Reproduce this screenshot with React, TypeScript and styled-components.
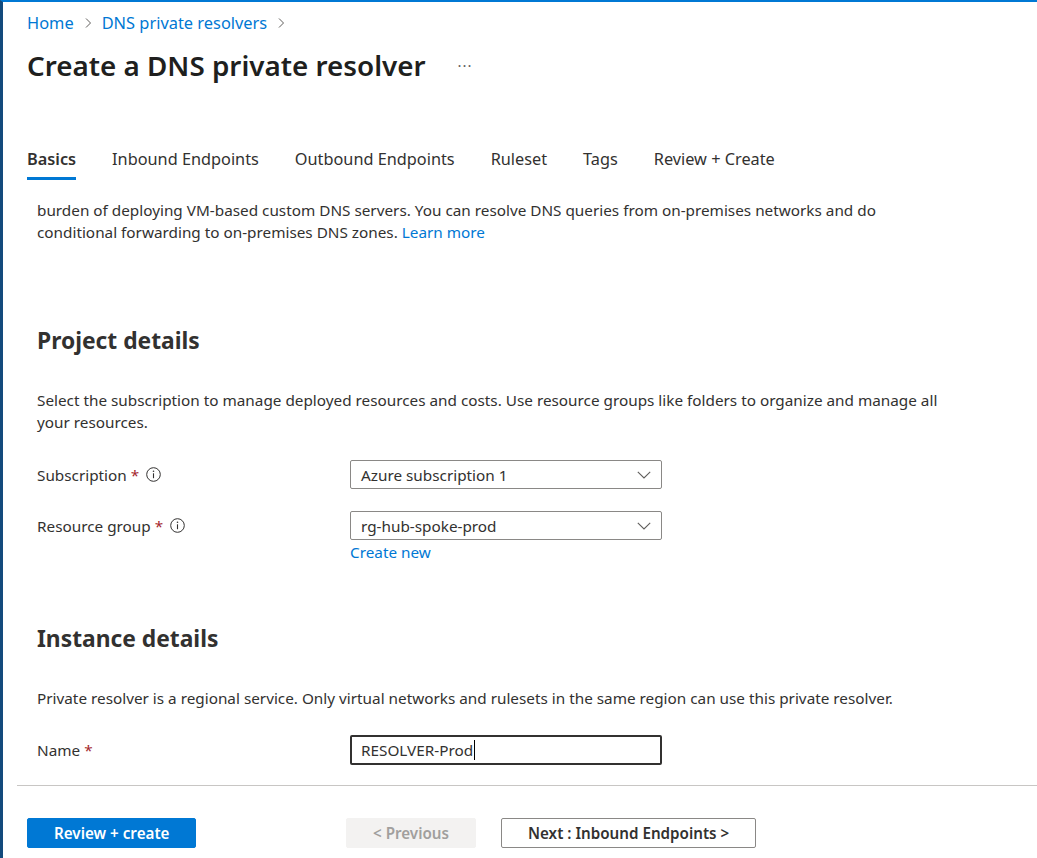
import React from "react";
import styled, { createGlobalStyle } from "styled-components";

const GlobalStyle = createGlobalStyle`
  html, body {
    margin: 0;
    padding: 0;
    background: #ffffff;
  }
  body {
    font-family: "Noto Sans", "Open Sans", sans-serif;
    color: #323130;
  }
  * {
    box-sizing: border-box;
  }
`;

const Frame = styled.div`
  display: flex;
  flex-direction: column;
  height: 100vh;
  overflow: hidden;
  border-top: 2px solid #0078d4;
  border-left: 3px solid #134a7c;
`;

const Header = styled.header`
  display: flex;
  flex-direction: column;
  padding-left: 24px;
`;

const Breadcrumb = styled.nav`
  display: flex;
  align-items: center;
  gap: 10px;
  margin-top: 10px;
  height: 22px;
  font-size: 16.4px;
`;

const Crumb = styled.a`
  color: #0078d4;
  text-decoration: none;
  line-height: 22px;
`;

const TitleRow = styled.div`
  display: flex;
  align-items: center;
  gap: 32px;
  margin-top: 13px;
  height: 36px;
`;

const Title = styled.h1`
  margin: 0;
  font-size: 27.8px;
  font-weight: 600;
  line-height: 36px;
  color: #201f1e;
`;

const MoreButton = styled.span`
  font-size: 15px;
  letter-spacing: 1px;
  color: #605e5c;
  line-height: 36px;
`;

const TabBar = styled.div`
  display: flex;
  gap: 36px;
  margin-top: 65px;
`;

const Tab = styled.div<{ $active?: boolean }>`
  font-size: 16.3px;
  line-height: 22px;
  padding-bottom: 7px;
  font-weight: ${(p) => (p.$active ? 600 : 400)};
  color: #323130;
  border-bottom: 3px solid ${(p) => (p.$active ? "#0078d4" : "transparent")};
`;

const Pane = styled.main`
  flex: 1;
  overflow: hidden;
  padding-left: 34px;
`;

/* the blade is scrolled: the top of the intro is hidden under the tab strip */
const IntroClip = styled.div`
  display: flex;
  flex-direction: column;
  justify-content: flex-end;
  height: 40px;
  margin-top: 23px;
  overflow: hidden;
`;

const Paragraph = styled.p<{ $top?: number }>`
  margin: ${(p) => p.$top ?? 0}px 0 0;
  max-width: 910px;
  font-size: 15.3px;
  line-height: 22px;
  color: #323130;
`;

const TextLink = styled.a`
  color: #0078d4;
  text-decoration: none;
`;

const SectionHeading = styled.h2<{ $top: number }>`
  margin: ${(p) => p.$top}px 0 0;
  font-size: 22.8px;
  font-weight: 700;
  line-height: 30px;
  color: #323130;
`;

const FormRow = styled.div<{ $top: number }>`
  display: grid;
  grid-template-columns: 313px 312px;
  align-items: center;
  margin-top: ${(p) => p.$top}px;
`;

const Label = styled.label`
  display: flex;
  align-items: center;
  font-size: 15.3px;
  line-height: 22px;
  color: #323130;
`;

const Required = styled.span`
  color: #a4262c;
  margin-left: 4px;
`;

const InfoWrap = styled.span`
  display: inline-flex;
  margin-left: 7px;
`;

const SelectBox = styled.div`
  display: flex;
  align-items: center;
  justify-content: space-between;
  height: 29px;
  padding: 0 10px;
  border: 1px solid #8a8886;
  border-radius: 2px;
  font-size: 15.3px;
  color: #323130;
`;

const TextBox = styled.div`
  display: flex;
  align-items: center;
  height: 30px;
  padding: 0 9px;
  border: 2px solid #323130;
  border-radius: 2px;
  font-size: 15.3px;
  color: #323130;
`;

const Caret = styled.span`
  display: inline-block;
  width: 1px;
  height: 20px;
  margin-left: 1px;
  background: #000000;
`;

const CreateLink = styled(TextLink)`
  display: block;
  margin-left: 313px;
  margin-top: 2px;
  font-size: 15.3px;
  line-height: 20px;
`;

const Footer = styled.footer`
  margin-left: 14px;
  border-top: 1px solid #c8c6c4;
  padding: 32px 0 10px 10px;
`;

const ButtonBar = styled.div`
  display: grid;
  grid-template-columns: 319px 155px auto;
  align-items: center;
`;

type Variant = "primary" | "disabled" | "default";

const Button = styled.button<{ $variant: Variant }>`
  justify-self: start;
  height: 30px;
  padding: 0 26px;
  border-radius: 2px;
  font-family: inherit;
  font-size: 15.2px;
  font-weight: 600;
  border: 1px solid
    ${(p) =>
      p.$variant === "primary" ? "#0078d4" : p.$variant === "disabled" ? "#f3f2f1" : "#8a8886"};
  background: ${(p) =>
    p.$variant === "primary" ? "#0078d4" : p.$variant === "disabled" ? "#f3f2f1" : "#ffffff"};
  color: ${(p) =>
    p.$variant === "primary" ? "#ffffff" : p.$variant === "disabled" ? "#a19f9d" : "#323130"};
`;

const CrumbChevron = () => (
  <svg width="8" height="12" viewBox="0 0 8 12" fill="none">
    <path d="M2 1.5 L6.5 6 L2 10.5" stroke="#605e5c" strokeWidth="1" />
  </svg>
);

const DownChevron = () => (
  <svg width="14" height="8" viewBox="0 0 14 8" fill="none">
    <path d="M0.8 0.8 L7 7 L13.2 0.8" stroke="#605e5c" strokeWidth="1.1" />
  </svg>
);

const InfoIcon = () => (
  <InfoWrap>
    <svg width="15" height="15" viewBox="0 0 15 15" fill="none">
      <circle cx="7.5" cy="7.5" r="6.8" stroke="#323130" strokeWidth="1" />
      <circle cx="7.5" cy="4.3" r="0.8" fill="#323130" />
      <path d="M7.5 6.3 V11.2" stroke="#323130" strokeWidth="1.1" />
    </svg>
  </InfoWrap>
);

const tabs = ["Basics", "Inbound Endpoints", "Outbound Endpoints", "Ruleset", "Tags", "Review + Create"];

export default function App() {
  return (
    <>
      <GlobalStyle />
      <Frame>
        <Header>
          <Breadcrumb>
            <Crumb>Home</Crumb>
            <CrumbChevron />
            <Crumb>DNS private resolvers</Crumb>
            <CrumbChevron />
          </Breadcrumb>
          <TitleRow>
            <Title>Create a DNS private resolver</Title>
            <MoreButton>···</MoreButton>
          </TitleRow>
          <TabBar>
            {tabs.map((t, i) => (
              <Tab key={t} $active={i === 0}>
                {t}
              </Tab>
            ))}
          </TabBar>
        </Header>

        <Pane>
          <IntroClip>
            <Paragraph>
              burden of deploying VM-based custom DNS servers. You can resolve DNS queries from on-premises
              networks and do conditional forwarding to on-premises DNS zones. <TextLink>Learn more</TextLink>
            </Paragraph>
          </IntroClip>

          <SectionHeading $top={83}>Project details</SectionHeading>
          <Paragraph $top={33}>
            Select the subscription to manage deployed resources and costs. Use resource groups like folders to
            organize and manage all your resources.
          </Paragraph>

          <FormRow $top={27}>
            <Label>
              Subscription<Required>*</Required>
              <InfoIcon />
            </Label>
            <SelectBox>
              <span>Azure subscription 1</span>
              <DownChevron />
            </SelectBox>
          </FormRow>
          <FormRow $top={22}>
            <Label>
              Resource group<Required>*</Required>
              <InfoIcon />
            </Label>
            <SelectBox>
              <span>rg-hub-spoke-prod</span>
              <DownChevron />
            </SelectBox>
          </FormRow>
          <CreateLink>Create new</CreateLink>

          <SectionHeading $top={62}>Instance details</SectionHeading>
          <Paragraph $top={33}>
            Private resolver is a regional service. Only virtual networks and rulesets in the same region can use
            this private resolver.
          </Paragraph>

          <FormRow $top={26}>
            <Label>
              Name<Required>*</Required>
            </Label>
            <TextBox>
              RESOLVER-Prod
              <Caret />
            </TextBox>
          </FormRow>
        </Pane>

        <Footer>
          <ButtonBar>
            <Button $variant="primary">Review + create</Button>
            <Button $variant="disabled">&lt; Previous</Button>
            <Button $variant="default">Next : Inbound Endpoints &gt;</Button>
          </ButtonBar>
        </Footer>
      </Frame>
    </>
  );
}
